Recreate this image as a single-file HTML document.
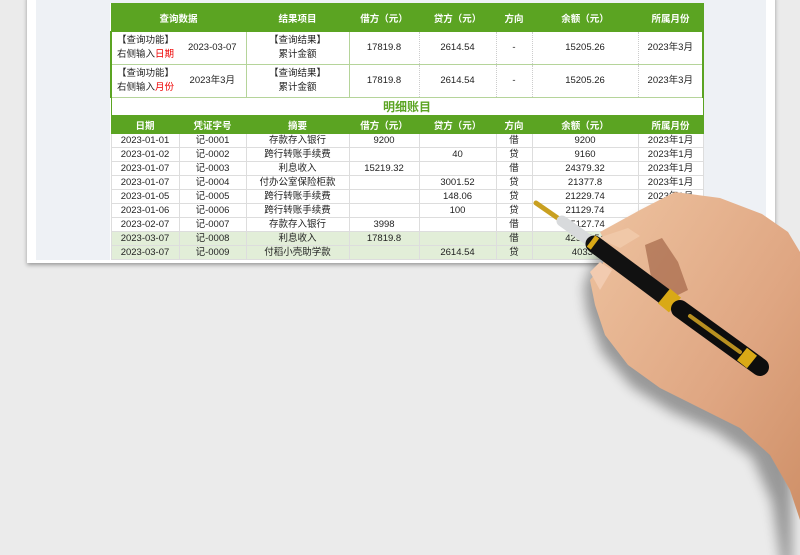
<!DOCTYPE html>
<html><head><meta charset="utf-8"><style>
body{margin:0;width:800px;height:555px;background:#ebebeb;position:relative;overflow:hidden;font-family:"Liberation Sans","Noto Sans CJK SC",sans-serif}
.paper{position:absolute;left:27px;top:-5px;width:748px;height:268px;background:#fff;box-shadow:0 2px 4px rgba(0,0,0,.35)}
.panel{position:absolute;left:36px;top:0;width:730px;height:260px;background:#eef1f5}
table{position:absolute;left:110px;top:3px;border-collapse:collapse;width:592px;table-layout:fixed;background:#fff;font-size:9.5px;color:#222}
td{text-align:center;padding:0;border:1px solid #ddd;white-space:nowrap;overflow:hidden}
.h td{background:#5ba422;color:#fff;font-weight:bold;border-color:#5ba422}
.q td{height:32px;line-height:14px;border-top:1px solid #b5d49a;border-bottom:1px solid #b5d49a;border-left:1px dotted #ccc;border-right:1px dotted #ccc}
.q td.s{border-left:1px solid #b5d49a}
.t td{height:17px;color:#5ba422;font-weight:bold;font-size:12px;border-color:#5ba422}
.d td{height:13px;line-height:13px}
.g td{background:#e2eed8}
.r{color:#e00}
</style></head><body>
<div class="paper"></div><div class="panel"></div>
<table>
<colgroup><col style="width:68px"><col style="width:67px"><col style="width:103px"><col style="width:70px"><col style="width:77px"><col style="width:36px"><col style="width:106px"><col style="width:65px"></colgroup>
<tr class="h"><td colspan="2" style="height:27px">查询数据</td><td>结果项目</td><td>借方（元）</td><td>贷方（元）</td><td>方向</td><td>余额（元）</td><td>所属月份</td></tr>
<tr class="q"><td style="border-left:2px solid #5ba422;border-right:none">【查询功能】<br>右侧输入<span class="r">日期</span></td><td style="border-left:none">2023-03-07</td><td class="s">【查询结果】<br>累计金额</td><td class="s">17819.8</td><td>2614.54</td><td>-</td><td>15205.26</td><td style="border-right:2px solid #5ba422">2023年3月</td></tr>
<tr class="q"><td style="border-left:2px solid #5ba422;border-right:none">【查询功能】<br>右侧输入<span class="r">月份</span></td><td style="border-left:none">2023年3月</td><td class="s">【查询结果】<br>累计金额</td><td class="s">17819.8</td><td>2614.54</td><td>-</td><td>15205.26</td><td style="border-right:2px solid #5ba422">2023年3月</td></tr>
<tr class="t"><td colspan="8">明细账目</td></tr>
<tr class="h"><td style="height:17px">日期</td><td>凭证字号</td><td>摘要</td><td>借方（元）</td><td>贷方（元）</td><td>方向</td><td>余额（元）</td><td>所属月份</td></tr>
<tr class="d"><td>2023-01-01</td><td>记-0001</td><td>存款存入银行</td><td>9200</td><td></td><td>借</td><td>9200</td><td>2023年1月</td></tr>
<tr class="d"><td>2023-01-02</td><td>记-0002</td><td>跨行转账手续费</td><td></td><td>40</td><td>贷</td><td>9160</td><td>2023年1月</td></tr>
<tr class="d"><td>2023-01-07</td><td>记-0003</td><td>利息收入</td><td>15219.32</td><td></td><td>借</td><td>24379.32</td><td>2023年1月</td></tr>
<tr class="d"><td>2023-01-07</td><td>记-0004</td><td>付办公室保险柜款</td><td></td><td>3001.52</td><td>贷</td><td>21377.8</td><td>2023年1月</td></tr>
<tr class="d"><td>2023-01-05</td><td>记-0005</td><td>跨行转账手续费</td><td></td><td>148.06</td><td>贷</td><td>21229.74</td><td>2023年1月</td></tr>
<tr class="d"><td>2023-01-06</td><td>记-0006</td><td>跨行转账手续费</td><td></td><td>100</td><td>贷</td><td>21129.74</td><td>2023年1月</td></tr>
<tr class="d"><td>2023-02-07</td><td>记-0007</td><td>存款存入银行</td><td>3998</td><td></td><td>借</td><td>25127.74</td><td>2023年2月</td></tr>
<tr class="d g"><td>2023-03-07</td><td>记-0008</td><td>利息收入</td><td>17819.8</td><td></td><td>借</td><td>42947.54</td><td>2023年3月</td></tr>
<tr class="d g"><td>2023-03-07</td><td>记-0009</td><td>付稻小壳助学款</td><td></td><td>2614.54</td><td>贷</td><td>40333</td><td>2023年3月</td></tr>
</table>
<svg style="position:absolute;left:0;top:0" width="800" height="555">
<defs><filter id="s" x="-20%" y="-20%" width="140%" height="140%"><feGaussianBlur stdDeviation="6"/></filter>
<linearGradient id="sk" x1="0" y1="0" x2="1" y2="1"><stop offset="0" stop-color="#eec3a0"/><stop offset=".6" stop-color="#dfa682"/><stop offset="1" stop-color="#cf9068"/></linearGradient></defs>
<path d="M605,240 L640,212 L675,193 L720,198 L765,216 L790,235 L800,255 L800,555 L790,555 L780,490 L760,445 L725,420 L680,400 L640,375 L610,340 L595,300 L592,275 Z" fill="#000" opacity=".35" filter="url(#s)" transform="translate(-8,12)"/>
<path d="M600,232 L640,210 L675,192 L720,198 L762,214 L788,232 L800,252 L800,520 L790,490 L770,455 L740,428 L700,408 L660,388 L628,365 L605,335 L595,305 L590,280 L600,268 L610,250 Z" fill="url(#sk)"/>
<path d="M645,245 L662,238 L678,262 L688,290 L672,298 L652,282 Z" fill="#9a5a3e" opacity=".6"/>
<path d="M598,238 L628,228 L640,236 L620,248 Z" fill="#f0c8a8"/>
<path d="M590,272 L600,262 L612,270 L600,290 Z" fill="#f2cbb0"/>
<g stroke-linecap="round">
<line x1="536" y1="203" x2="562" y2="221" stroke="#c9a020" stroke-width="5"/>
<line x1="562" y1="221" x2="590" y2="241" stroke="#d8dadc" stroke-width="11"/>
<line x1="594" y1="244" x2="664" y2="296" stroke="#111" stroke-width="17"/>
<line x1="664" y1="296" x2="675" y2="305" stroke="#d9a916" stroke-width="19" stroke-linecap="butt"/>
<line x1="680" y1="309" x2="760" y2="367" stroke="#0d0d0d" stroke-width="18"/>
<line x1="690" y1="316" x2="740" y2="352" stroke="#b89020" stroke-width="4"/>
<line x1="742" y1="354" x2="752" y2="362" stroke="#d9a916" stroke-width="16" stroke-linecap="butt"/>
<line x1="591" y1="241" x2="595" y2="244" stroke="#d9a916" stroke-width="14" stroke-linecap="butt"/>
</g>
</svg>
</body></html>
